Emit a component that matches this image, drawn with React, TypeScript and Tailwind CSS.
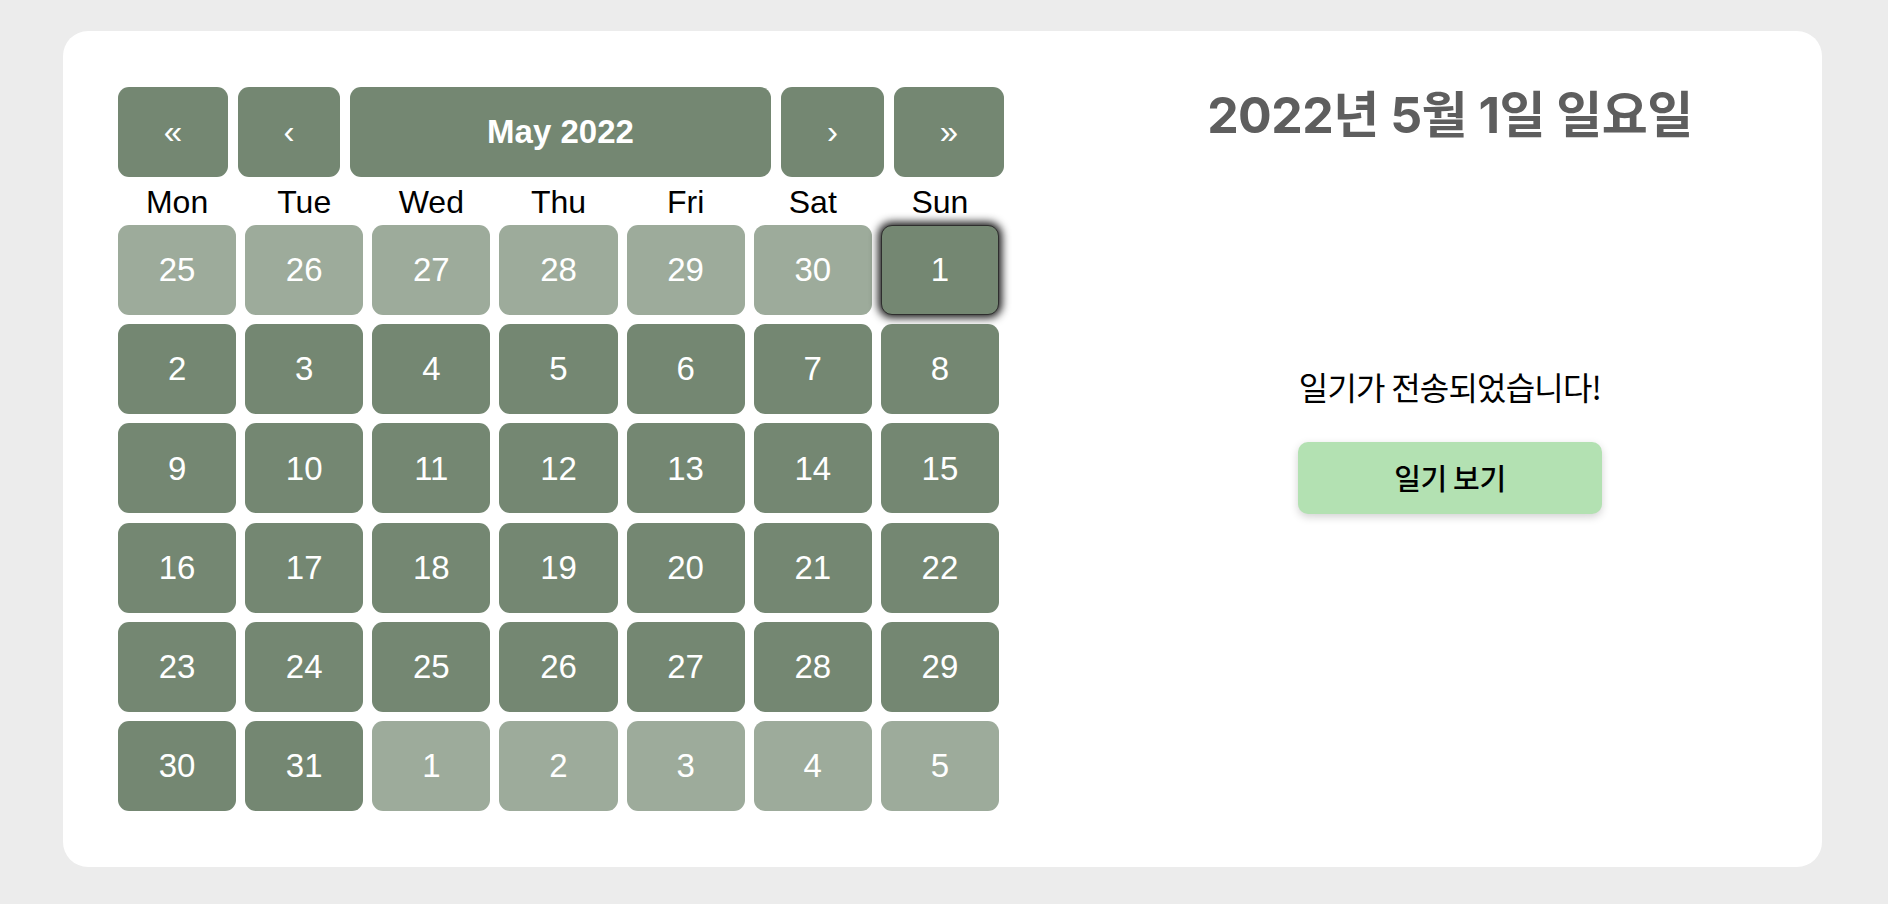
import React from "react";

type Day = { n: number; dim?: boolean; selected?: boolean };

const weekdays = ["Mon", "Tue", "Wed", "Thu", "Fri", "Sat", "Sun"];

function buildDays(): Day[] {
  const days: Day[] = [];
  for (let n = 25; n <= 30; n++) days.push({ n, dim: true });
  days.push({ n: 1, selected: true });
  for (let n = 2; n <= 31; n++) days.push({ n });
  for (let n = 1; n <= 5; n++) days.push({ n, dim: true });
  return days;
}

function NavButton({ label, className }: { label: string; className: string }) {
  return (
    <button
      className={
        "h-full rounded-[11px] bg-[#748772] text-white text-[33px] flex items-center justify-center " +
        className
      }
    >
      {label}
    </button>
  );
}

function Calendar() {
  const days = buildDays();
  return (
    <div className="w-[886px] font-['Liberation_Sans',Arial,sans-serif]">
      <div className="flex h-[90px] gap-[10px]">
        <NavButton label="«" className="w-[110px]" />
        <NavButton label="‹" className="w-[102px]" />
        <NavButton label="May 2022" className="flex-1 font-bold" />
        <NavButton label="›" className="w-[103px]" />
        <NavButton label="»" className="w-[110px]" />
      </div>
      <div className="grid w-[881px] grid-cols-7 gap-x-[9px] h-[48px] pt-[1px]">
        {weekdays.map((d) => (
          <div key={d} className="text-center text-[32px] leading-normal text-black">
            {d}
          </div>
        ))}
      </div>
      <div className="grid w-[881px] grid-cols-7 gap-x-[9px] gap-y-[9.2px]">
        {days.map((d, i) => (
          <div
            key={i}
            className={
              "h-[90px] rounded-[11px] flex items-center justify-center text-white text-[33px] " +
              (d.dim ? "bg-[#9dab9b]" : "bg-[#748772]") +
              (d.selected ? " border border-[#2e2e2e] shadow-[0_0_9px_3px_rgba(0,0,0,0.9)]" : "")
            }
          >
            {d.n}
          </div>
        ))}
      </div>
    </div>
  );
}

function DiaryPanel() {
  return (
    <div className="ml-[74px] flex-1 flex flex-col items-center">
      <h1 className="mt-[-2px] text-[50px] leading-[60px] font-bold tracking-[-0.5px] text-[#5e5e5e] font-['Inter','Noto_Sans_CJK_KR',sans-serif]">
        2022년 5월 1일 일요일
      </h1>
      <p className="mt-[221px] text-[32px] leading-[40px] tracking-[-0.8px] text-black font-['Noto_Sans_CJK_KR',sans-serif]">
        일기가 전송되었습니다!
      </p>
      <button className="mt-[36px] w-[304px] h-[72px] rounded-[10px] bg-[#b3e1b2] shadow-[0_3px_8px_rgba(0,0,0,0.18)] text-[29px] font-medium tracking-[-0.3px] text-black font-['Noto_Sans_CJK_KR',sans-serif]">
        일기 보기
      </button>
    </div>
  );
}

export default function App() {
  return (
    <div className="min-h-screen bg-[#ececec] pt-[31px] pl-[63px]">
      <div className="w-[1759px] h-[836px] rounded-[25px] bg-white flex pl-[55px] pt-[56px]">
        <Calendar />
        <DiaryPanel />
      </div>
    </div>
  );
}
